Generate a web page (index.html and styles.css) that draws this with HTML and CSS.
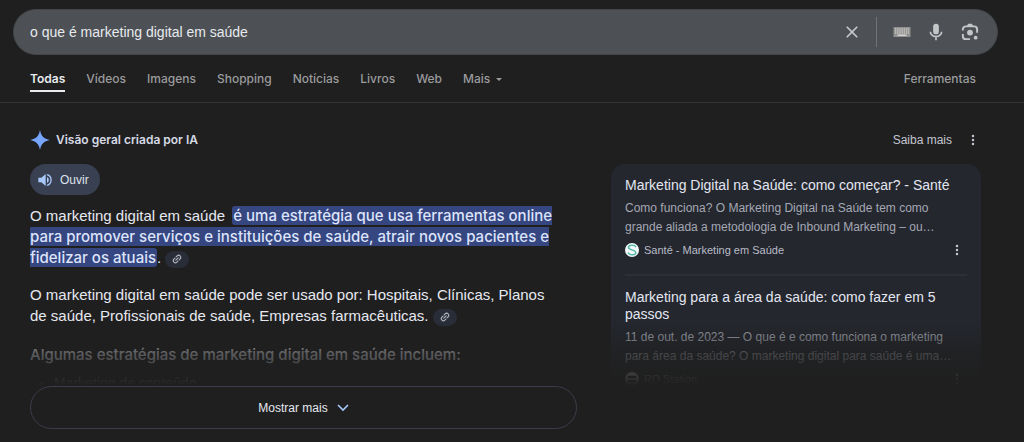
FILE: index.html
```html
<!DOCTYPE html>
<html lang="pt-BR">
<head>
<meta charset="utf-8">
<meta name="viewport" content="width=device-width, initial-scale=1">
<title>o que é marketing digital em saúde</title>
<link rel="stylesheet" href="styles.css">
</head>
<body>
<svg class="sprite" aria-hidden="true">
  <symbol id="dots" viewBox="0 0 24 24"><circle cx="12" cy="4" r="2.500"/><circle cx="12" cy="12" r="2.500"/><circle cx="12" cy="20" r="2.500"/></symbol>
  <symbol id="link" viewBox="0 0 24 24"><g fill="none" stroke="currentColor" stroke-width="2.600" stroke-linecap="round" transform="rotate(-45 12 12)"><path d="M10 7H6.500a5 5 0 0 0 0 10H10M14 7h3.500a5 5 0 0 1 0 10H14M8 12h8"/></g></symbol>
</svg>

<header class="top">
  <form class="search" role="search">
    <input class="search-input" type="text" aria-label="Pesquisar" value="o que é marketing digital em saúde">
    <button class="icon-btn clear" type="button" aria-label="Limpar">
      <svg width="20" height="20" viewBox="0 0 24 24"><path fill="currentColor" d="M19 6.410 17.590 5 12 10.590 6.410 5 5 6.410 10.590 12 5 17.590 6.410 19 12 13.410 17.590 19 19 17.590 13.410 12z"/></svg>
    </button>
    <button class="icon-btn" type="button" aria-label="Teclado">
      <svg width="18" height="12" viewBox="0 0 18 12"><rect width="17" height="10" x="0.500" y="1" fill="#92918f"/><g stroke="#dedede" stroke-width="1.200" stroke-dasharray="1.300 0.900"><path d="M2 3h14M2 5h14M2 7h14"/></g><path stroke="#dedede" stroke-width="1.300" d="M4.500 9.200h9"/></svg>
    </button>
    <button class="icon-btn" type="button" aria-label="Pesquisa por voz">
      <svg width="18" height="18" viewBox="0 0 24 24"><path fill="currentColor" d="M12 15a3.800 3.800 0 0 0 3.800-3.800V4.800a3.800 3.800 0 0 0-7.600 0v6.400A3.800 3.800 0 0 0 12 15z"/><path fill="none" stroke="currentColor" stroke-width="2.200" d="M4.500 11.500a7.500 6.700 0 0 0 15 0M12 18v5"/></svg>
    </button>
    <button class="icon-btn" type="button" aria-label="Pesquisa por imagem">
      <svg width="18" height="18" viewBox="0 0 24 24"><g fill="none" stroke="currentColor" stroke-width="2.600"><path d="M2.500 10V8.500A4 4 0 0 1 6.500 4.500h11a4 4 0 0 1 4 4V13M2.500 14.500v3a4 4 0 0 0 4 4H12"/></g><path fill="currentColor" d="M7.500 4.500 9.500 1h5l2 3.500z"/><circle cx="12" cy="12.800" r="3.900" fill="currentColor"/><circle cx="19.500" cy="19.500" r="2.500" fill="currentColor"/></svg>
    </button>
  </form>
  <nav class="tabs" aria-label="Tipos de resultado">
    <a class="tab active" href="#todas" aria-current="page">Todas</a>
    <a class="tab" href="#videos">Vídeos</a>
    <a class="tab" href="#imagens">Imagens</a>
    <a class="tab" href="#shopping">Shopping</a>
    <a class="tab" href="#noticias">Notícias</a>
    <a class="tab" href="#livros">Livros</a>
    <a class="tab" href="#web">Web</a>
    <button class="tab more" type="button">Mais <svg width="6" height="3" viewBox="0 0 6 3"><path fill="currentColor" d="M0 0h6L3 3z"/></svg></button>
    <button class="tab tools" type="button">Ferramentas</button>
  </nav>
</header>

<main class="overview">
  <div class="overview-head">
    <svg class="spark" width="20" height="20" viewBox="0 0 20 20"><path fill="#76a5fb" d="M10 0C11 6 14 9 20 10 14 11 11 14 10 20 9 14 6 11 0 10 6 9 9 6 10 0z"/></svg>
    <h1 class="overview-title">Visão geral criada por IA</h1>
    <a class="learn" href="#saiba-mais">Saiba mais</a>
    <button class="dots-btn" type="button" aria-label="Mais opções"><svg width="12" height="12"><use href="#dots"/></svg></button>
  </div>

  <div class="columns">
    <div class="left">
      <section class="answer">
        <button class="listen" type="button">
          <svg width="16" height="16" viewBox="0 0 24 24"><path fill="#a8c7fa" d="M2 8.500v7h4.500L13 21V3L6.500 8.500zM15 7.500v9a5 5 0 0 0 0-9z"/><path fill="none" stroke="#a8c7fa" stroke-width="2" d="M15 4a8.300 8.300 0 0 1 0 16"/></svg>
          Ouvir
        </button>
        <p class="text">O marketing digital em saúde <mark class="hl">é uma estratégia que usa ferramentas online para promover serviços e instituições de saúde, atrair novos pacientes e fidelizar os atuais</mark>. <button class="cite" type="button" aria-label="Ver fontes"><svg width="10" height="10"><use href="#link"/></svg></button></p>
        <p class="text">O marketing digital em saúde pode ser usado por: Hospitais, Clínicas, Planos de saúde, Profissionais de saúde, Empresas farmacêuticas. <button class="cite" type="button" aria-label="Ver fontes"><svg width="10" height="10"><use href="#link"/></svg></button></p>
        <h2 class="subtitle">Algumas estratégias de marketing digital em saúde incluem:</h2>
        <ul class="list"><li>Marketing de conteúdo</li></ul>
      </section>
      <button class="show-more" type="button">Mostrar mais <svg width="12" height="8" viewBox="0 0 12 8"><path fill="none" stroke="#a8c7fa" stroke-width="1.600" d="M1 1l5 5 5-5"/></svg></button>
    </div>

    <aside class="sources">
      <article class="source">
        <h3 class="source-title"><a href="#sante">Marketing Digital na Saúde: como começar? - Santé</a></h3>
        <p class="snippet">Como funciona? O Marketing Digital na Saúde tem como grande aliada a metodologia de Inbound Marketing – ou…</p>
        <div class="site">
          <svg width="14" height="14" viewBox="0 0 14 14"><circle cx="7" cy="7" r="7" fill="#f4fafa"/><path fill="none" stroke="#58b7ad" stroke-width="1.500" d="M11 4C9.500 1.500 3.500 1.800 3.500 4.500S10.800 6.500 10.800 9.500 4.500 12.500 3 9.500"/></svg>
          <span>Santé - Marketing em Saúde</span>
          <button class="dots-btn" type="button" aria-label="Opções da fonte"><svg width="12" height="12"><use href="#dots"/></svg></button>
        </div>
      </article>
      <article class="source">
        <h3 class="source-title"><a href="#rd">Marketing para a área da saúde: como fazer em 5 passos</a></h3>
        <p class="snippet">11 de out. de 2023 — O que é e como funciona o marketing para área da saúde? O marketing digital para saúde é uma…</p>
        <div class="site">
          <svg width="14" height="14" viewBox="0 0 14 14"><circle cx="7" cy="7" r="7" fill="#fff"/><path stroke="#1f1f1f" stroke-width="2" d="M3 5h8M3 9h8"/></svg>
          <span>RD Station</span>
          <button class="dots-btn" type="button" aria-label="Opções da fonte"><svg width="12" height="12"><use href="#dots"/></svg></button>
        </div>
      </article>
    </aside>
  </div>
</main>
</body>
</html>
```

FILE: styles.css
```css
* { box-sizing: border-box; }
body {
  margin: 0;
  background: #1f1f1f;
  color: #e6e8f0;
  font-family: "Liberation Sans", Arial, sans-serif;
  font-size: 12px;
}
button {
  margin: 0;
  padding: 0;
  border: 0;
  background: none;
  color: inherit;
  font: inherit;
  cursor: pointer;
}
a { color: inherit; text-decoration: none; }
h1, h2, h3, p, ul { margin: 0; }
svg { display: block; flex: none; }
.sprite { position: absolute; width: 0; height: 0; }

.top { padding-top: 9px; border-bottom: 1px solid #313335; }
.search {
  display: flex;
  align-items: center;
  height: 46px;
  margin: 0 26px 0 13px;
  padding: 0 17px 0 16px;
  border: 1px solid #424448;
  border-radius: 23px;
  background: #4d5156;
  color: #c4c5c7;
}
.search-input {
  flex: 1;
  min-width: 0;
  padding: 0;
  border: 0;
  outline: 0;
  background: none;
  color: #e8eaed;
  font: 14px "Liberation Sans", Arial, sans-serif;
}
.icon-btn {
  display: grid;
  place-items: center;
  width: 20px;
  height: 30px;
  margin-left: 14px;
}
.clear {
  width: 35px;
  padding-right: 15px;
  border-right: 1px solid #707377;
}
.clear + .icon-btn { margin-left: 15px; }
.tabs {
  display: flex;
  gap: 21px;
  margin: 0 48px 0 30px;
  height: 47px;
  padding-top: 15px;
  font: 500 12px/18px Inter, sans-serif;
  color: #9a9b9d;
}
.tab { height: 22px; white-space: nowrap; }
.active { color: #e8eaed; font-weight: 600; border-bottom: 2px solid #e8eaed; }
.more { display: flex; align-items: center; gap: 6px; height: 18px; }
.tools { margin-left: auto; height: 18px; }

.overview { padding: 27px 43px 12px 30px; }
.overview-head { display: flex; align-items: center; height: 20px; }
.overview-title { margin-left: 6px; font: 600 12px/20px Inter, sans-serif; color: #d6dae6; }
.learn { margin-left: auto; color: #c3c6d0; }
.dots-btn { color: #c3c6d0; fill: currentColor; }
.overview-head .dots-btn { margin: 0 2px 0 15px; }

.columns {
  display: grid;
  grid-template-columns: 547fr 370fr;
  gap: 34px;
  align-items: start;
  margin-top: 14px;
}
.answer { position: relative; height: 222px; overflow: hidden; }
.answer::after, .sources::after {
  content: "";
  position: absolute;
  inset: auto 0 0;
  height: 64px;
  background: linear-gradient(rgba(31, 31, 31, 0), rgba(31, 31, 31, 0.7) 50%, #1f1f1f);
  pointer-events: none;
}
.listen {
  display: flex;
  align-items: center;
  gap: 7px;
  height: 31px;
  padding: 0 11px 0 7px;
  border-radius: 16px;
  background: #394051;
  color: #dfe3ef;
}
.text { margin-top: 16px; padding-right: 12px; font-size: 15px; line-height: 21px; }
.listen + .text { margin-top: 10px; }
.hl {
  padding: 0 1px;
  margin-left: 3px;
  border-radius: 3px;
  background: #354681;
  color: #dde4fb;
  font: 500 15px/21px Inter, sans-serif;
}
.cite {
  display: inline-grid;
  place-items: center;
  width: 24px;
  height: 17px;
  border-radius: 9px;
  background: #292d38;
  color: #b5b9c5;
  vertical-align: middle;
}
.subtitle { margin-top: 18px; font: 500 15px/21px Inter, sans-serif; }
.list { margin-top: 8px; padding-left: 24px; font-size: 14px; line-height: 21px; }
.show-more {
  display: flex;
  align-items: center;
  justify-content: center;
  gap: 9px;
  width: 100%;
  height: 43px;
  border: 1px solid #3b3d4a;
  border-radius: 22px;
  color: #e6e8f0;
}

.sources {
  position: relative;
  height: 222px;
  padding: 0 14px;
  overflow: hidden;
  border-radius: 14px 14px 0 0;
  background: #24272e;
}
.source { padding: 13px 0 16px; }
.source + .source { border-top: 2px solid #2c2f38; }
.source-title { font-size: 14px; font-weight: 400; line-height: 17px; color: #e3e6f2; }
.snippet { margin-top: 5px; font-size: 12px; line-height: 19px; color: #a5a8b4; }
.site { display: flex; align-items: center; gap: 5px; height: 16px; margin-top: 5px; font-size: 11px; color: #b9bcc8; }
.site .dots-btn { margin-left: auto; margin-right: 4px; }
```
